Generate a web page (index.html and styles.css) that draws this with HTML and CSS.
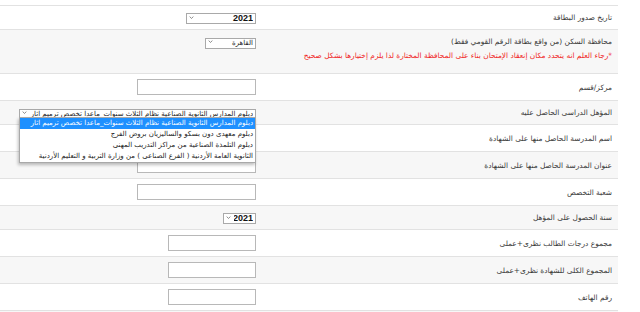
FILE: index.html
```html
<!DOCTYPE html>
<html lang="ar">
<head>
  <meta charset="utf-8">
  <meta name="viewport" content="width=device-width">
  <title>بيانات المتقدم</title>
  <link rel="stylesheet" href="styles.css">
</head>
<body>

    <table class="form" dir="rtl">
        <tr>
            <td class="lbl">تاريخ صدور البطاقة</td>
            <td class="ctl">
                <span class="sel year w70">
                    <select><option>2021</option></select>
                    <svg class="chev" viewBox="0 0 6 4"><path d="M0.5 0.8 L3 3.2 L5.5 0.8"/></svg>
                </span>
            </td>
        </tr>
        <tr>
            <td class="lbl">
                <div class="ltr" dir="ltr">محافظة السكن (من واقع بطاقة الرقم القومي فقط)</div>
                <p class="note">*رجاء العلم انه يتحدد مكان إنعقاد الإمتحان بناء على المحافظة المختارة لذا يلزم إختيارها بشكل صحيح</p>
            </td>
            <td class="ctl top">
                <span class="sel w51">
                    <select><option>القاهرة</option></select>
                    <svg class="chev" viewBox="0 0 6 4"><path d="M0.5 0.8 L3 3.2 L5.5 0.8"/></svg>
                </span>
            </td>
        </tr>
        <tr>
            <td class="lbl">مركز/قسم</td>
            <td class="ctl"><input type="text" class="txt"></td>
        </tr>
        <tr>
            <td class="lbl">المؤهل الدراسى الحاصل عليه</td>
            <td class="ctl">
                <span class="sel wide">
                    <select><option>دبلوم المدارس الثانوية الصناعية نظام الثلاث سنوات_ماعدا تخصص ترميم اثار</option></select>
                    <svg class="chev" viewBox="0 0 6 4"><path d="M0.5 0.8 L3 3.2 L5.5 0.8"/></svg>
                    <ul class="dropdown">
                        <li class="active">دبلوم المدارس الثانوية الصناعية نظام الثلاث سنوات_ماعدا تخصص ترميم اثار</li>
                        <li>دبلوم معهدى دون بسكو والساليزيان بروض الفرج</li>
                        <li>دبلوم التلمذة الصناعية من مراكز التدريب المهنى</li>
                        <li>الثانوية العامة الأردنية ( الفرع الصناعى ) من وزارة التربية و التعليم الأردنية</li>
                    </ul>
                </span>
            </td>
        </tr>
        <tr>
            <td class="lbl">اسم المدرسة الحاصل منها على الشهادة</td>
            <td class="ctl"><input type="text" class="txt"></td>
        </tr>
        <tr>
            <td class="lbl">عنوان المدرسة الحاصل منها على الشهادة</td>
            <td class="ctl"><input type="text" class="txt"></td>
        </tr>
        <tr>
            <td class="lbl">شعبة التخصص</td>
            <td class="ctl"><input type="text" class="txt"></td>
        </tr>
        <tr>
            <td class="lbl">سنة الحصول على المؤهل</td>
            <td class="ctl">
                <span class="sel year w33">
                    <select><option>2021</option></select>
                    <svg class="chev" viewBox="0 0 6 4"><path d="M0.5 0.8 L3 3.2 L5.5 0.8"/></svg>
                </span>
            </td>
        </tr>
        <tr>
            <td class="lbl">مجموع درجات الطالب نظرى+عملى</td>
            <td class="ctl"><input type="text" class="txt short"></td>
        </tr>
        <tr>
            <td class="lbl">المجموع الكلى للشهادة نظرى+عملى</td>
            <td class="ctl"><input type="text" class="txt short"></td>
        </tr>
        <tr>
            <td class="lbl">رقم الهاتف</td>
            <td class="ctl"><input type="text" class="txt short"></td>
        </tr>
        <tr>
            <td class="lbl">&nbsp;</td>
            <td class="ctl"></td>
        </tr>
    </table>

</body>
</html>
```

FILE: styles.css
```css
body{
    margin: 0;
    background-color: #fff;
    font-family: "DejaVu Sans", sans-serif;
    color: #3a3a3a;
}

.form{
    width: 618px;
    margin-top: 5px;
    border-collapse: collapse;
    direction: rtl;
}

.form td{
    border-top: 1px solid #e2e2e2;
    padding: 5px 6px;
    vertical-align: middle;
    font-size: 7.4px;
    line-height: 13px;
    text-align: right;
}

.form tr:nth-child(even) td{
    background-color: #f7f7f7;
}

.form .lbl{
    width: 344px;
}

.form .ctl.top{
    vertical-align: top;
}

.ltr{
    text-align: right;
}

.note{
    margin: 1px 0 6px 0;
    color: #f02525;
}

/* select boxes */
.sel{
    position: relative;
    display: inline-block;
    vertical-align: middle;
    height: 11px;
}

.sel select{
    -webkit-appearance: none;
    appearance: none;
    box-sizing: border-box;
    width: 100%;
    height: 11px;
    margin: 0;
    padding: 0 2px 0 10px;
    border: 1px solid #a9a9a9;
    border-radius: 0;
    background-color: #fff;
    font-family: "DejaVu Sans", sans-serif;
    font-size: 7px;
    line-height: 9px;
    color: #222;
    direction: rtl;
}

.sel.year select{
    font-family: "Liberation Sans", sans-serif;
    font-weight: bold;
    font-size: 9px;
    color: #111;
}

.sel .chev{
    position: absolute;
    left: 3px;
    top: 4px;
    width: 5px;
    height: 3px;
    fill: none;
    stroke: #555;
    stroke-width: 0.9;
}

.w70{ width: 70px; }
.w51{ width: 51px; }
.w33{ width: 33px; }
.wide{ width: 237px; }

/* open list */
.dropdown{
    position: absolute;
    z-index: 2;
    top: 10px;
    left: 0;
    width: 237px;
    box-sizing: border-box;
    margin: 0;
    padding: 0;
    list-style: none;
    background-color: #fff;
    border: 1px solid #a9a9a9;
    box-shadow: -1px 2px 3px rgba(0,0,0,0.25);
}

.dropdown li{
    padding: 0 2px;
    height: 11px;
    line-height: 11px;
    font-size: 7px;
    color: #222;
    white-space: nowrap;
    overflow: hidden;
}

.dropdown li.active{
    background-color: #1e90ff;
    color: #fff;
}

/* text inputs */
.txt{
    box-sizing: border-box;
    width: 119px;
    height: 16px;
    margin: 0;
    padding: 0 2px;
    border: 1px solid #b8b8b8;
    background-color: #fff;
    vertical-align: middle;
}

.txt.short{
    width: 88px;
}
```
